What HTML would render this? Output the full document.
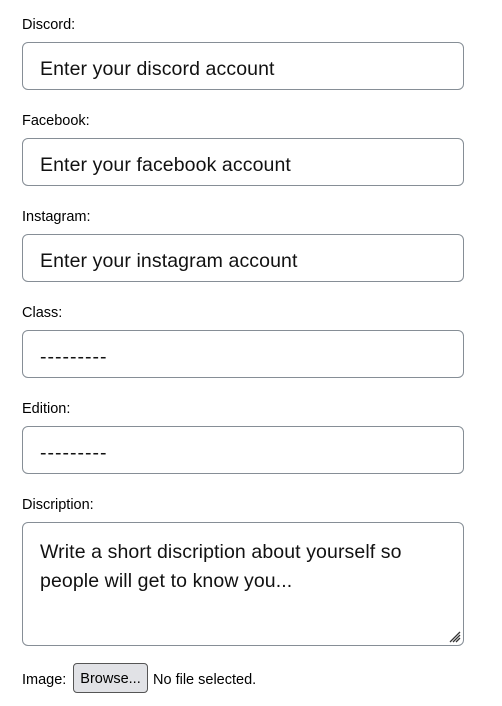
<!DOCTYPE html>
<html><head><style>
body{margin:0;background:#fff;font-family:"Liberation Sans","DejaVu Sans",sans-serif;color:#000;width:502px;height:706px;position:relative;overflow:hidden}
.l{position:absolute;left:22px;font-size:14.5px;line-height:16px}
.b{position:absolute;left:22px;width:440px;height:46px;border:1px solid #868e96;border-radius:6px;box-sizing:content-box}
.t{position:absolute;left:17px;top:15px;font-size:19.5px;line-height:22px;color:#111;white-space:nowrap;letter-spacing:0.1px}
</style></head><body>
<div class="l" style="top:17px">Discord:</div>
<div class="b" style="top:42px"><div class="t">Enter your discord account</div></div>
<div class="l" style="top:113px">Facebook:</div>
<div class="b" style="top:138px"><div class="t">Enter your facebook account</div></div>
<div class="l" style="top:209px">Instagram:</div>
<div class="b" style="top:234px"><div class="t">Enter your instagram account</div></div>
<div class="l" style="top:305px">Class:</div>
<div class="b" style="top:330px"><div class="t" style="letter-spacing:1px">---------</div></div>
<div class="l" style="top:401px">Edition:</div>
<div class="b" style="top:426px"><div class="t" style="letter-spacing:1px">---------</div></div>
<div class="l" style="top:497px">Discription:</div>
<div class="b" style="top:522px;height:122px"><div class="t" style="top:15px;line-height:29px;white-space:normal;width:400px">Write a short discription about yourself so people will get to know you...</div>
<svg style="position:absolute;right:2px;bottom:2px" width="12" height="12"><path d="M11 1L1 11M11 4L4 11M11 7L7 11" stroke="#333" stroke-width="1.3"/></svg></div>
<div class="l" style="top:672px">Image:</div>
<div style="position:absolute;left:73px;top:663px;width:73px;height:28px;border:1px solid #555;border-radius:4px;background:#e1e2e6;font-size:14.5px;line-height:30px;text-align:center">Browse...</div>
<div class="l" style="top:672px;left:153px">No file selected.</div>
</body></html>
